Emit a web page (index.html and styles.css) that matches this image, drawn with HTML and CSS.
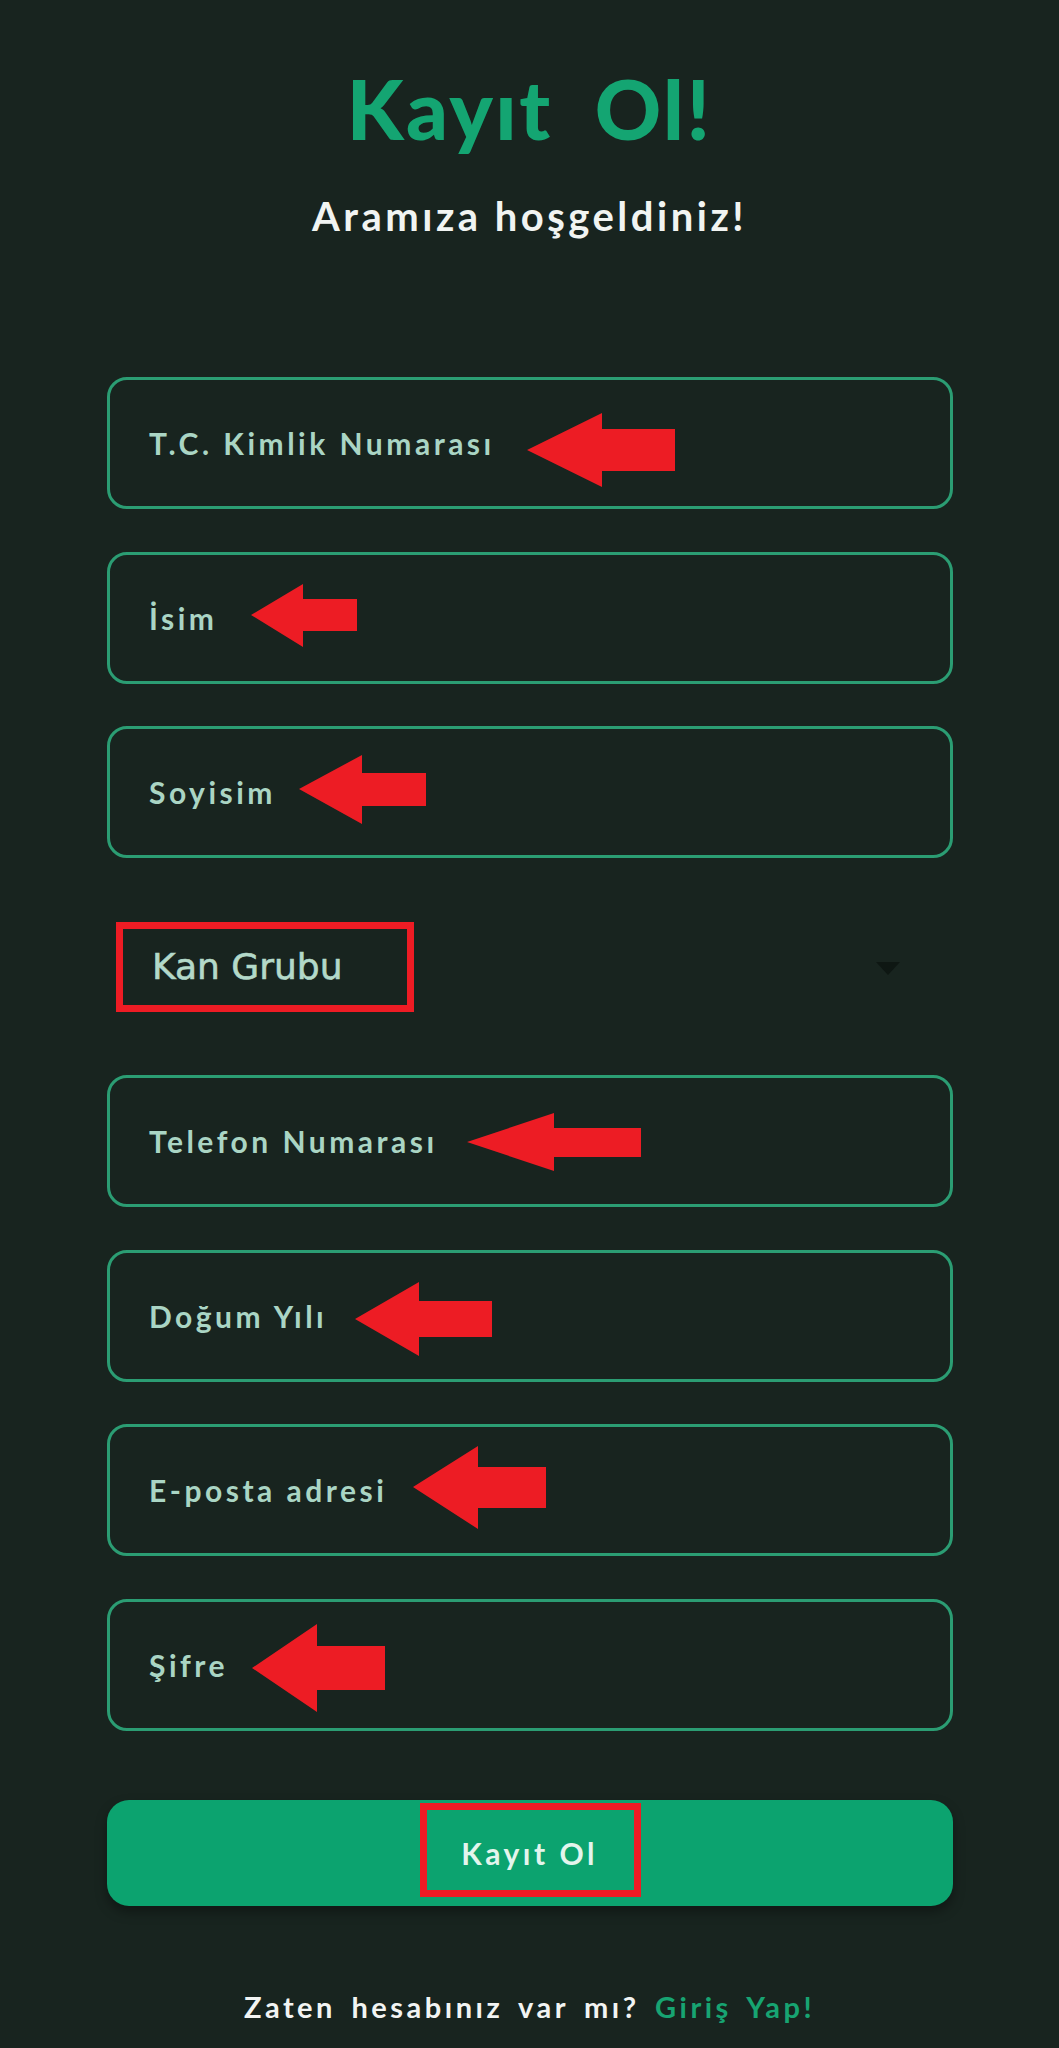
FILE: index.html
```html
<!DOCTYPE html>
<html lang="tr">
<head>
<meta charset="utf-8">
<title>Kayıt Ol</title>
<link rel="stylesheet" href="styles.css">
</head>
<body>
<main class="page">
  <h1 class="title">Kayıt Ol!</h1>
  <p class="subtitle">Aramıza hoşgeldiniz!</p>
  <form class="fields">
    <div class="field">T.C. Kimlik Numarası</div>
    <div class="field">İsim</div>
    <div class="field">Soyisim</div>
    <div class="field select">
      <span class="select-label">Kan Grubu</span>
      <span class="caret"></span>
    </div>
    <div class="field">Telefon Numarası</div>
    <div class="field">Doğum Yılı</div>
    <div class="field">E-posta adresi</div>
    <div class="field">Şifre</div>
    <button type="button" class="submit">Kayıt Ol</button>
  </form>
  <p class="footer">Zaten hesabınız var mı? <span class="link">Giriş Yap!</span></p>
</main>
<svg class="annotations" width="1059" height="2048" viewBox="0 0 1059 2048">
  <g fill="#ed1c24">
    <polygon points="527,450 602,413 602,429 675,429 675,471 602,471 602,487"/>
    <polygon points="251,615 303,584 303,599 357,599 357,631 303,631 303,647"/>
    <polygon points="299,789 362,755 362,773 426,773 426,806 362,806 362,824"/>
    <polygon points="467,1142 554,1113 554,1128 641,1128 641,1157 554,1157 554,1171"/>
    <polygon points="355,1319 419,1282 419,1301 492,1301 492,1337 419,1337 419,1356"/>
    <polygon points="413,1487 478,1446 478,1467 546,1467 546,1508 478,1508 478,1529"/>
    <polygon points="252,1668 317,1624 317,1646 385,1646 385,1690 317,1690 317,1712"/>
  </g>
  <g fill="none" stroke="#ed1c24" stroke-width="7">
    <rect x="119.5" y="925.5" width="291" height="83"/>
    <rect x="423.5" y="1806.5" width="214" height="87"/>
  </g>
</svg>
</body>
</html>
```

FILE: styles.css
```css
html, body {
  margin: 0;
  padding: 0;
}

body {
  background: #18241f;
  font-family: "Lato", "Open Sans", sans-serif;
  min-height: 2048px;
  position: relative;
}

.page {
  width: 846px;
  margin: 0 auto;
  padding-top: 67px;
}

.title {
  margin: 0;
  font-size: 82px;
  line-height: 1;
  font-weight: 900;
  color: #14a572;
  text-align: center;
  word-spacing: 20px;
  letter-spacing: 2.5px;
}

.subtitle {
  margin: 47px 0 0;
  font-size: 40px;
  line-height: 1;
  font-weight: 700;
  color: #f1f4f2;
  text-align: center;
  letter-spacing: 3.5px;
}

.fields {
  margin-top: 141px;
  display: flex;
  flex-direction: column;
  gap: 42.5px;
}

.field {
  box-sizing: border-box;
  height: 132px;
  border: 3px solid #2b9d73;
  border-radius: 20px;
  display: flex;
  align-items: center;
  padding-left: 39.5px;
  font-size: 30px;
  font-weight: 700;
  letter-spacing: 3.5px;
  color: #aad5c4;
}

.select {
  border-color: transparent;
  justify-content: space-between;
  padding-left: 42.5px;
  padding-right: 50px;
}

.select-label {
  font-family: "DejaVu Sans", sans-serif;
  font-size: 36px;
  font-weight: 400;
  letter-spacing: 0;
  color: #b3d9c9;
  -webkit-text-stroke: 0.6px #b3d9c9;
}

.caret {
  width: 0;
  height: 0;
  border-left: 12.5px solid transparent;
  border-right: 12.5px solid transparent;
  border-top: 13px solid #0e1713;
  margin-top: 4px;
}

.submit {
  margin-top: 26.5px;
  height: 106px;
  border: none;
  border-radius: 22px;
  background: #0ca36f;
  color: #e3f5ed;
  font-family: "Lato", "Open Sans", sans-serif;
  font-size: 30px;
  font-weight: 700;
  letter-spacing: 3.5px;
  box-shadow: 0 6px 12px rgba(0, 0, 0, 0.35);
}

.footer {
  margin: 86px 0 0;
  font-size: 29px;
  line-height: 1;
  font-weight: 700;
  color: #f2f4f3;
  text-align: center;
  letter-spacing: 3.5px;
  word-spacing: 5px;
}

.link {
  color: #17a472;
}

.annotations {
  position: absolute;
  top: 0;
  left: 0;
  pointer-events: none;
}
```
